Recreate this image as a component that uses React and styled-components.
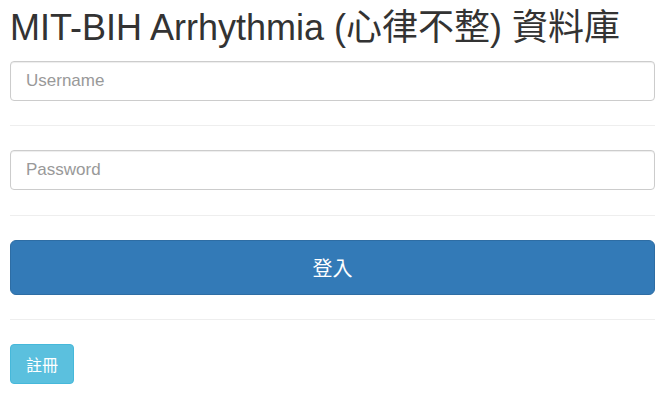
import React from "react";
import styled, { createGlobalStyle } from "styled-components";

const Global = createGlobalStyle`
  html, body { margin: 0; padding: 0; background: #fff; }
  body {
    font-family: "Liberation Sans", Arial, "Noto Sans CJK TC", sans-serif;
    color: #333;
  }
  * { box-sizing: border-box; }
`;

const Page = styled.div`
  padding: 0 10px;
`;

const Title = styled.h1`
  margin: 8px 0 13px;
  font-size: 36px;
  font-weight: 400;
  line-height: 39.6px;
  color: #333;
  font-family: "Liberation Sans", Arial, "Noto Sans CJK TC", sans-serif;
  white-space: nowrap;
`;

const Input = styled.input`
  display: block;
  width: 100%;
  height: 40px;
  padding: 0 15px;
  font-size: 17px;
  font-family: "Liberation Sans", Arial, sans-serif;
  color: #555;
  background: #fff;
  border: 1px solid #ccc;
  border-radius: 4px;
  box-shadow: inset 0 1px 1px rgba(0, 0, 0, 0.075);
  outline: none;
  &::placeholder { color: #999; }
`;

const Rule = styled.hr`
  margin: 24.5px 0 24px;
  border: 0;
  border-top: 1px solid #eee;
  height: 0;
`;

const Button = styled.button`
  display: ${(p) => (p.$block ? "block" : "inline-block")};
  width: ${(p) => (p.$block ? "100%" : "auto")};
  height: ${(p) => (p.$block ? "55px" : "40px")};
  padding: ${(p) => (p.$block ? "0" : "0 15px")};
  font-size: ${(p) => (p.$block ? "20px" : "16px")};
  font-family: "Liberation Sans", Arial, "Noto Sans CJK TC", sans-serif;
  color: #fff;
  background: ${(p) => (p.$variant === "info" ? "#5bc0de" : "#337ab7")};
  border: 1px solid ${(p) => (p.$variant === "info" ? "#46b8da" : "#2e6da4")};
  border-radius: ${(p) => (p.$block ? "6px" : "4px")};
  cursor: pointer;
`;

export default function App() {
  return (
    <>
      <Global />
      <Page>
        <Title>MIT-BIH Arrhythmia (心律不整) 資料庫</Title>
        <Input type="text" placeholder="Username" />
        <Rule />
        <Input type="password" placeholder="Password" />
        <Rule />
        <Button $block>登入</Button>
        <Rule />
        <Button $variant="info">註冊</Button>
      </Page>
    </>
  );
}
